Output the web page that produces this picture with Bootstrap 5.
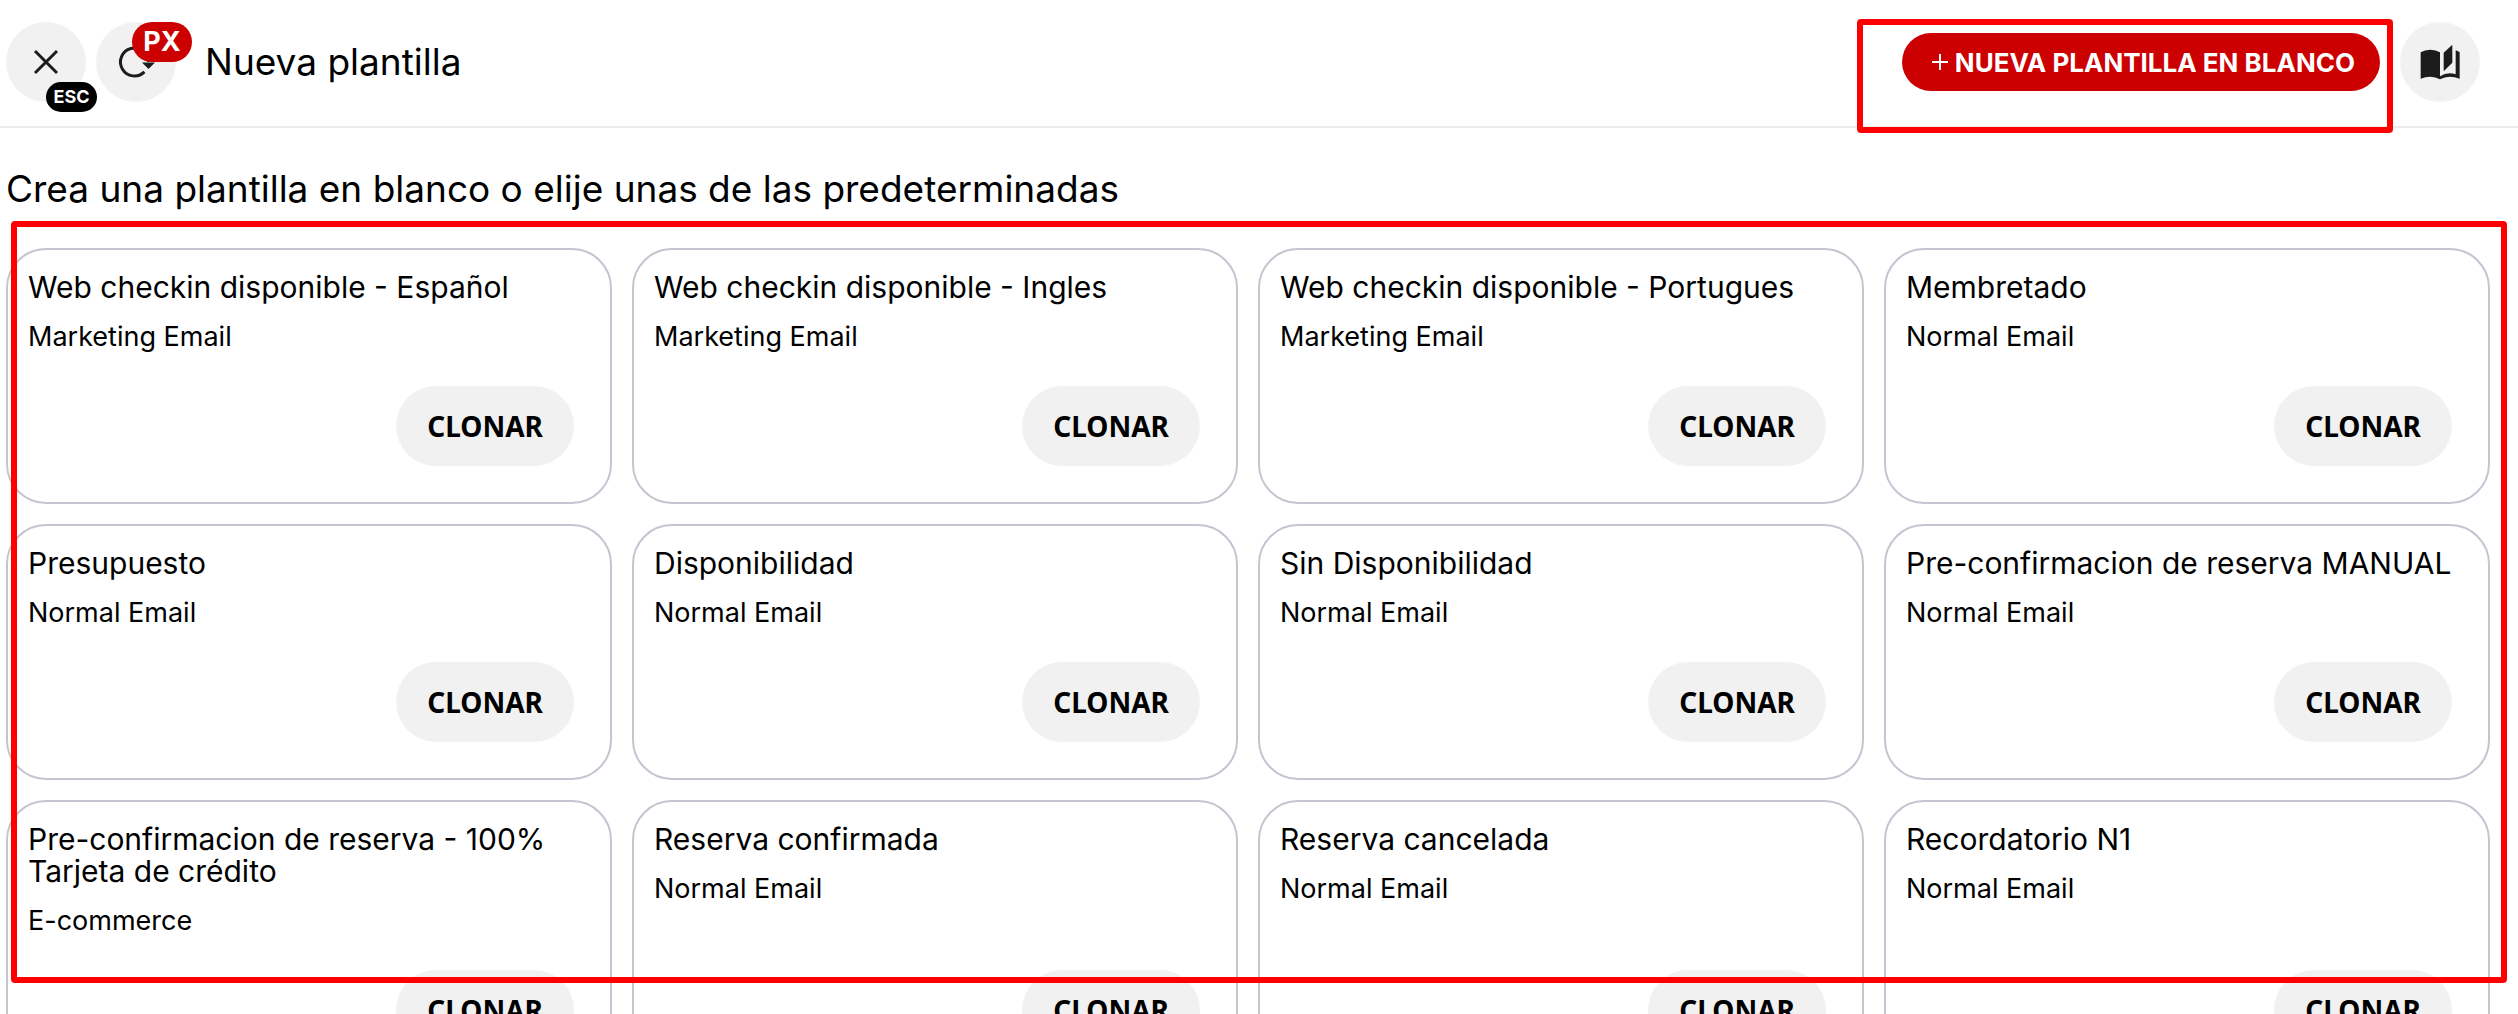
<!DOCTYPE html>
<html lang="es">
<head>
<meta charset="utf-8">
<meta name="viewport" content="width=device-width, initial-scale=1">
<title>Nueva plantilla</title>
<link href="https://cdn.jsdelivr.net/npm/bootstrap@5.3.0/dist/css/bootstrap.min.css" rel="stylesheet">
<style>
  body { font-family: Inter, "Liberation Sans", sans-serif; color: #000; background: #fff; }
  .topbar { padding: 22px 38px 24px 6px; border-bottom: 2px solid #ececec; }
  .topbar-nav { gap: 10px; }
  .round-btn { width: 80px; height: 80px; border-radius: 50%; background: #f1f1f1; color: #1c1c1c; }
  .key-tag { position: absolute; font-weight: 700; color: #fff; text-align: center; }
  .key-esc { left: 40px; top: 60px; width: 51px; line-height: 30px; font-size: 18px; border-radius: 15px; background: #000; }
  .key-px { left: 36px; top: 0; width: 60px; line-height: 40px; font-size: 27px; border-radius: 20px; background: #c00; }
  .title-lg { font-size: 37px; line-height: 50px; font-weight: 400; }
  .page-name { margin-left: 29px; }
  .topbar-tools { gap: 20px; }
  .new-btn { height: 58px; padding: 0 25px 0 30px; gap: 7px; border-radius: 29px; background: #c00; color: #fff; font-size: 26px; font-weight: 700; }
  .outlined { position: absolute; border: 6px solid #f00; border-radius: 4px; pointer-events: none; }
  .outlined-action { inset: -14px -13px -42px -45px; }
  .outlined-list { inset: -27px 11px 31px 11px; }
  .intro { padding: 36px 6px 34px; }
  .list-area { height: 0; }
  .tpl-grid { padding: 0 28px 0 6px; display: grid; grid-template-columns: repeat(4, 1fr); gap: 20px; }
  .tpl { min-height: 256px; padding: 21px 36px 36px 20px; border: 2px solid #c3c6d1; border-radius: 40px; }
  .tpl h3 { font-size: 30px; line-height: 32px; font-weight: 400; margin: 0 -16px 17px 0; }
  .tpl p { font-size: 27px; line-height: 33px; margin: 0 0 33px; }
  .clone-btn { height: 80px; padding: 0 31px; border-radius: 40px; background: #f1f1f1; color: #000; font-family: "Noto Sans", "Open Sans", sans-serif; font-size: 28px; font-weight: 700; }
</style>
<script src="https://cdn.jsdelivr.net/npm/bootstrap@5.3.0/dist/js/bootstrap.bundle.min.js"></script>
</head>
<body class="d-flex flex-column vh-100 overflow-hidden">
<header class="topbar d-flex align-items-center flex-shrink-0">
  <div class="topbar-nav d-flex">
    <button type="button" class="round-btn border-0 p-0 position-relative d-flex align-items-center justify-content-center" aria-label="Cerrar">
      <svg width="26" height="26" viewBox="0 0 26 26" fill="none" stroke="currentColor" stroke-width="3"><path d="M2 2 24 24M24 2 2 24"/></svg>
      <span class="key-tag key-esc">ESC</span>
    </button>
    <button type="button" class="round-btn border-0 p-0 position-relative d-flex align-items-center justify-content-center" aria-label="Recargar">
      <svg width="40" height="40" viewBox="0 0 40 40"><path d="M28.4 29.9A14 14 0 1 1 32.5 20" fill="none" stroke="currentColor" stroke-width="3"/><path d="M26 20.5H39L32.5 27Z" fill="currentColor"/></svg>
      <span class="key-tag key-px">PX</span>
    </button>
  </div>
  <h1 class="title-lg page-name mb-0">Nueva plantilla</h1>
  <div class="topbar-tools d-flex align-items-center ms-auto">
    <div class="position-relative">
      <button type="button" class="new-btn border-0 d-flex align-items-center text-nowrap">
        <svg width="16" height="16" viewBox="0 0 16 16" stroke="currentColor" stroke-width="2"><path d="M0 8H16M8 0V16"/></svg>
        NUEVA PLANTILLA EN BLANCO
      </button>
      <div class="outlined outlined-action"></div>
    </div>
    <button type="button" class="round-btn border-0 p-0 d-flex align-items-center justify-content-center" aria-label="Manual">
      <svg width="40" height="36" viewBox="0 0 120 108" fill="currentColor"><path d="M2 25Q14 17 31 17T60 25V106Q46 98 31 98T2 104Z"/><path d="M71 26 97 2V56L71 82Z"/><path d="M107 19Q113 21 119 25V104Q104 98 89 98T60 106V97Q74 88 89 88Q99 88 107 91Z"/></svg>
    </button>
  </div>
</header>
<main class="d-flex flex-column flex-grow-1">
  <div class="intro"><h2 class="title-lg mb-0">Crea una plantilla en blanco o elije unas de las predeterminadas</h2></div>
  <div class="list-area position-relative flex-grow-1">
    <div class="tpl-grid">
      <article class="tpl d-flex flex-column"><h3>Web checkin disponible - Español</h3><p>Marketing Email</p><button type="button" class="clone-btn border-0 mt-auto align-self-end">CLONAR</button></article>
      <article class="tpl d-flex flex-column"><h3>Web checkin disponible - Ingles</h3><p>Marketing Email</p><button type="button" class="clone-btn border-0 mt-auto align-self-end">CLONAR</button></article>
      <article class="tpl d-flex flex-column"><h3>Web checkin disponible - Portugues</h3><p>Marketing Email</p><button type="button" class="clone-btn border-0 mt-auto align-self-end">CLONAR</button></article>
      <article class="tpl d-flex flex-column"><h3>Membretado</h3><p>Normal Email</p><button type="button" class="clone-btn border-0 mt-auto align-self-end">CLONAR</button></article>
      <article class="tpl d-flex flex-column"><h3>Presupuesto</h3><p>Normal Email</p><button type="button" class="clone-btn border-0 mt-auto align-self-end">CLONAR</button></article>
      <article class="tpl d-flex flex-column"><h3>Disponibilidad</h3><p>Normal Email</p><button type="button" class="clone-btn border-0 mt-auto align-self-end">CLONAR</button></article>
      <article class="tpl d-flex flex-column"><h3>Sin Disponibilidad</h3><p>Normal Email</p><button type="button" class="clone-btn border-0 mt-auto align-self-end">CLONAR</button></article>
      <article class="tpl d-flex flex-column"><h3>Pre-confirmacion de reserva MANUAL</h3><p>Normal Email</p><button type="button" class="clone-btn border-0 mt-auto align-self-end">CLONAR</button></article>
      <article class="tpl d-flex flex-column"><h3>Pre-confirmacion de reserva - 100% Tarjeta de crédito</h3><p>E-commerce</p><button type="button" class="clone-btn border-0 mt-auto align-self-end">CLONAR</button></article>
      <article class="tpl d-flex flex-column"><h3>Reserva confirmada</h3><p>Normal Email</p><button type="button" class="clone-btn border-0 mt-auto align-self-end">CLONAR</button></article>
      <article class="tpl d-flex flex-column"><h3>Reserva cancelada</h3><p>Normal Email</p><button type="button" class="clone-btn border-0 mt-auto align-self-end">CLONAR</button></article>
      <article class="tpl d-flex flex-column"><h3>Recordatorio N1</h3><p>Normal Email</p><button type="button" class="clone-btn border-0 mt-auto align-self-end">CLONAR</button></article>
    </div>
    <div class="outlined outlined-list"></div>
  </div>
</main>
</body>
</html>
